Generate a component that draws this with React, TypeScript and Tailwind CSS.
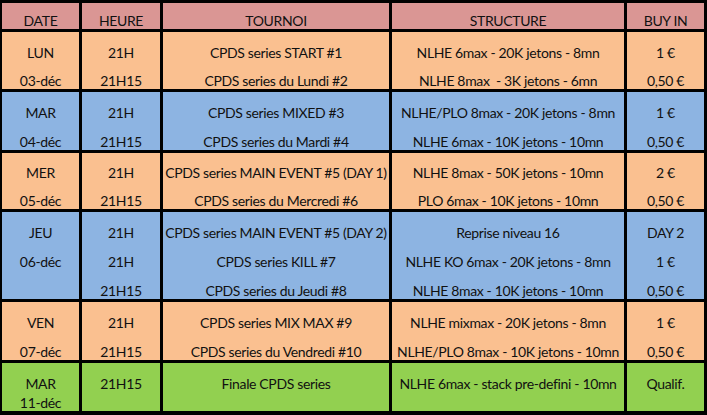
type Row = {
  bg: string
  lines: string[]
  date: string[]
  heure: string[]
  tournoi: string[]
  structure: string[]
  buyin: string[]
}

const rows: Row[] = [
  {
    bg: "bg-[#fac090]",
    lines: ["h-[29px]", "h-[28px]"],
    date: ["LUN", "03-déc"],
    heure: ["21H", "21H15"],
    tournoi: ["CPDS series START #1", "CPDS series du Lundi #2"],
    structure: ["NLHE 6max - 20K jetons - 8mn", "NLHE 8max  - 3K jetons - 6mn"],
    buyin: ["1 €", "0,50 €"],
  },
  {
    bg: "bg-[#8db4e2]",
    lines: ["h-[29px]", "h-[29px]"],
    date: ["MAR", "04-déc"],
    heure: ["21H", "21H15"],
    tournoi: ["CPDS series MIXED #3", "CPDS series du Mardi #4"],
    structure: ["NLHE/PLO 8max - 20K jetons - 8mn", "NLHE 6max - 10K jetons - 10mn"],
    buyin: ["1 €", "0,50 €"],
  },
  {
    bg: "bg-[#fac090]",
    lines: ["h-[28px]", "h-[28px]"],
    date: ["MER", "05-déc"],
    heure: ["21H", "21H15"],
    tournoi: ["CPDS series MAIN EVENT #5 (DAY 1)", "CPDS series du Mercredi #6"],
    structure: ["NLHE 8max - 50K jetons - 10mn", "PLO 6max - 10K jetons - 10mn"],
    buyin: ["2 €", "0,50 €"],
  },
  {
    bg: "bg-[#8db4e2]",
    lines: ["h-[29px]", "h-[29px]", "h-[29px]"],
    date: ["JEU", "06-déc", ""],
    heure: ["21H", "21H", "21H15"],
    tournoi: ["CPDS series MAIN EVENT #5 (DAY 2)", "CPDS series KILL #7", "CPDS series du Jeudi #8"],
    structure: ["Reprise niveau 16", "NLHE KO 6max - 20K jetons - 8mn", "NLHE 8max - 10K jetons - 10mn"],
    buyin: ["DAY 2", "1 €", "0,50 €"],
  },
  {
    bg: "bg-[#fac090]",
    lines: ["h-[29px]", "h-[29px]"],
    date: ["VEN", "07-déc"],
    heure: ["21H", "21H15"],
    tournoi: ["CPDS series MIX MAX #9", "CPDS series du Vendredi #10"],
    structure: ["NLHE mixmax - 20K jetons - 8mn", "NLHE/PLO 8max - 10K jetons - 10mn"],
    buyin: ["1 €", "0,50 €"],
  },
  {
    bg: "bg-[#92d050]",
    lines: ["h-[29px]", "h-[19px]"],
    date: ["MAR", "11-déc"],
    heure: ["21H15", ""],
    tournoi: ["Finale CPDS series", ""],
    structure: ["NLHE 6max - stack pre-defini - 10mn", ""],
    buyin: ["Qualif.", ""],
  },
]

const headers = ["DATE", "HEURE", "TOURNOI", "STRUCTURE", "BUY IN"]

function Cell({ bg, lines, texts }: { bg: string; lines: string[]; texts: string[] }) {
  return (
    <div className={`${bg} flex flex-col`}>
      {lines.map((h, i) => (
        <div key={i} className={`${h} flex items-end justify-center whitespace-pre`}>
          <span className="leading-[16px]">{texts[i]}</span>
        </div>
      ))}
    </div>
  )
}

export default function App() {
  return (
    <div className="w-[707px] h-[415px] bg-black pt-[3px] pl-[2px] pr-[3px] pb-[4px] font-[Lato,sans-serif] text-[14px] tracking-[-0.35px] text-[#111]">
      <div className="grid grid-cols-[77px_78px_226px_232px_77px] gap-[3px]">
        {headers.map((h) => (
          <Cell key={h} bg="bg-[#da9694]" lines={["h-[26px]"]} texts={[h]} />
        ))}
        {rows.map((r, i) => (
          <div key={i} className="contents">
            <Cell bg={r.bg} lines={r.lines} texts={r.date} />
            <Cell bg={r.bg} lines={r.lines} texts={r.heure} />
            <Cell bg={r.bg} lines={r.lines} texts={r.tournoi} />
            <Cell bg={r.bg} lines={r.lines} texts={r.structure} />
            <Cell bg={r.bg} lines={r.lines} texts={r.buyin} />
          </div>
        ))}
      </div>
    </div>
  )
}
